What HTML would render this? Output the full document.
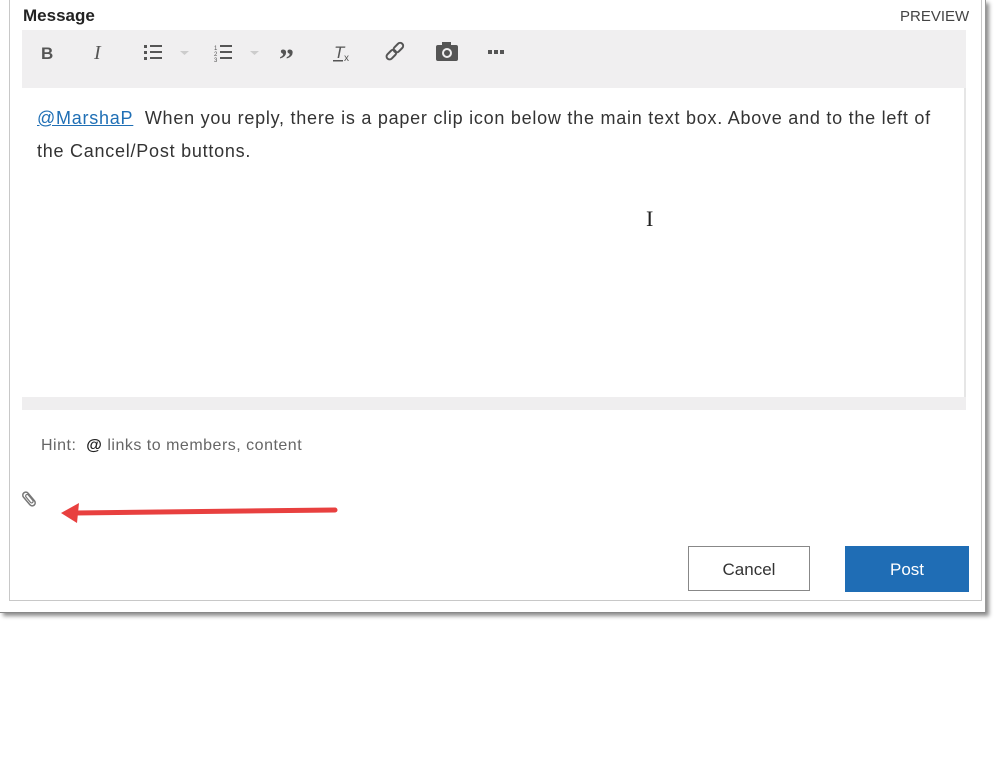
<!DOCTYPE html><html><head><style>
body{margin:0;width:999px;height:779px;background:#fff;position:relative;overflow:hidden;font-family:"Liberation Sans",sans-serif}
.a{position:absolute}
</style></head><body>
<div class="a" style="left:0;top:0;width:985px;height:612px;background:#fff;box-shadow:3px 3px 4px rgba(0,0,0,.45);border-right:1px solid #999;border-bottom:1px solid #888"></div>
<div class="a" style="left:9px;top:0;width:971px;height:600px;border-left:1px solid #c8c8c8;border-right:1px solid #c8c8c8;border-bottom:1px solid #c8c8c8;background:#fff"></div>
<div class="a" style="left:23px;top:6px;font-size:17px;font-weight:bold;color:#222">Message</div>
<div class="a" style="left:900px;top:8px;font-size:15px;color:#444">PREVIEW</div>
<div class="a" style="left:22px;top:30px;width:944px;height:58px;background:#f0eff0"></div>
<div class="a" style="left:22px;top:88px;width:944px;height:309px;border-right:2px solid #e6e6e6;box-sizing:border-box"></div>
<div class="a" style="left:22px;top:397px;width:944px;height:13px;background:#efeeef"></div>
<svg class="a" style="left:0;top:30px" width="540" height="58" fill="#555" stroke="#555">
<text x="41" y="29" font-size="17" font-weight="bold" stroke="none" font-family="Liberation Sans">B</text>
<text x="94" y="29" font-size="20" font-style="italic" stroke="none" font-family="Liberation Serif">I</text>
<g stroke="none"><rect x="144" y="15" width="3" height="3"/><rect x="144" y="21" width="3" height="3"/><rect x="144" y="27" width="3" height="3"/>
<rect x="150" y="15" width="12" height="2"/><rect x="150" y="21" width="12" height="2"/><rect x="150" y="27" width="12" height="2"/>
<path d="M180 21h9l-4.5 4z" fill="#ccc"/>
<text x="214" y="20" font-size="6">1</text><text x="214" y="26" font-size="6">2</text><text x="214" y="32" font-size="6">3</text>
<rect x="220" y="15" width="12" height="2"/><rect x="220" y="21" width="12" height="2"/><rect x="220" y="27" width="12" height="2"/>
<path d="M250 21h9l-4.5 4z" fill="#ccc"/>
<text x="279" y="39" font-size="30" font-weight="bold" font-family="Liberation Serif">”</text>
<text x="334" y="28" font-size="17" font-style="italic">T</text><text x="344" y="31" font-size="10">x</text><rect x="333" y="30" width="10" height="1.5"/>
<rect x="436" y="15" width="22" height="16" rx="2"/><rect x="442" y="12" width="9" height="4"/>
<rect x="488" y="20" width="4" height="4"/><rect x="494" y="20" width="4" height="4"/><rect x="500" y="20" width="4" height="4"/></g>
<circle cx="447" cy="23" r="4" fill="none" stroke="#f0eff0" stroke-width="2"/>
<g fill="none" stroke-width="2"><rect x="386" y="22" width="11" height="6" rx="3" transform="rotate(-45 391 25)"/><rect x="393" y="15" width="11" height="6" rx="3" transform="rotate(-45 398 18)"/></g>
</svg>
<div class="a" style="left:37px;top:102px;font-size:18px;line-height:33px;color:#333;width:915px;letter-spacing:0.75px"><span style="color:#1f6fb5;text-decoration:underline">@MarshaP</span>&nbsp; When you reply, there is a paper clip icon below the main text box. Above and to the left of the Cancel/Post buttons.</div>
<div class="a" style="left:646px;top:206px;font-size:22px;color:#222;font-family:'Liberation Serif',serif">I</div>
<div class="a" style="left:41px;top:437px;font-size:16px;color:#666;letter-spacing:0.5px">Hint:&nbsp; <b style="color:#222">@</b> links to members, content</div>
<svg class="a" style="left:20px;top:490px" width="20" height="20"><rect x="6" y="1" width="6" height="16" rx="3" fill="none" stroke="#777" stroke-width="1.5" transform="rotate(-40 9 9)"/><rect x="8" y="4" width="3" height="10" rx="1.5" fill="none" stroke="#777" stroke-width="1.2" transform="rotate(-40 9 9)"/></svg>
<svg class="a" style="left:55px;top:498px" width="290" height="30"><path d="M280 12 L20 15" stroke="#e8403f" stroke-width="5" stroke-linecap="round"/><path d="M6 15 L24 5 L22 25 Z" fill="#e8403f"/></svg>
<div class="a" style="left:688px;top:546px;width:122px;height:45px;border:1px solid #888;box-sizing:border-box;text-align:center;line-height:45px;font-size:17px;color:#333">Cancel</div>
<div class="a" style="left:845px;top:546px;width:124px;height:46px;background:#1f6db5;text-align:center;line-height:48px;font-size:17px;color:#fff">Post</div>
</body></html>
